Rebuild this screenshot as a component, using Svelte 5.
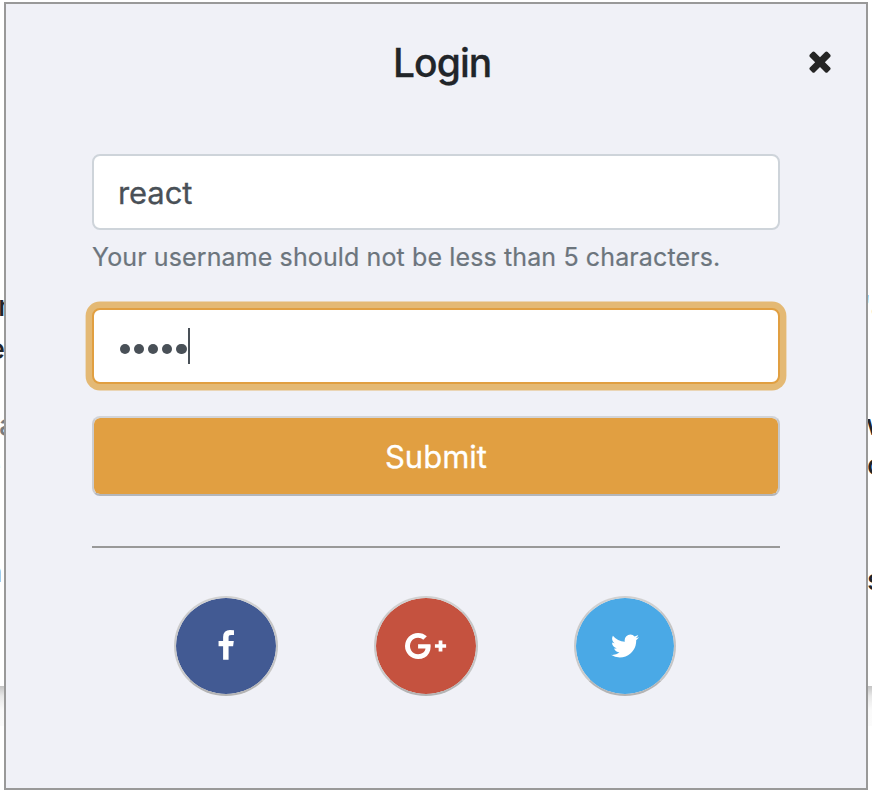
<script>
  const socials = [
    {
      name: 'Facebook', color: '#425a93', width: 104, box: '0 0 1792 1792', iw: 32,
      d: 'M1343 12v264h-157q-86 0-116 36t-30 108v189h293l-39 296h-254v759h-306v-759h-255v-296h255v-218q0-186 104-288.5t277-102.5q147 0 228 12z'
    },
    {
      name: 'Google Plus', color: '#c5523f', width: 104, box: '0 0 2304 1792', iw: 41.14,
      d: 'M1437 913q0 208-87 370.5t-248 254-369 91.5q-149 0-285-58t-234-156-156-234-58-285 58-285 156-234 234-156 285-58q286 0 491 192l-199 191q-117-113-292-113-123 0-227.5 62t-165.5 168.5-61 232.5 61 232.5 165.5 168.5 227.5 62q83 0 152.5-23t114.5-57.5 78.5-78.5 49-83 21.5-74h-416v-252h692q12 63 12 122zm867-122v210h-209v209h-210v-209h-209v-210h209v-209h210v209h209z'
    },
    {
      name: 'Twitter', color: '#4aa9e6', width: 102, box: '0 0 1792 1792', iw: 32,
      d: 'M1684 408q-67 98-162 167 1 14 1 42 0 130-38 259.5t-115.5 248.5-184.5 210.5-258 146-323 54.5q-271 0-496-145 35 4 78 4 225 0 401-138-105-2-188-64.5t-114-159.5q33 5 61 5 43 0 85-11-112-23-185.5-111.5t-73.5-205.5v-4q68 38 146 41-66-44-105-115t-39-154q0-88 44-163 121 149 294.5 238.5t371.5 99.5q-8-38-8-74 0-134 94.5-228.5t228.5-94.5q140 0 236 102 109-21 205-78-37 115-142 178 93-10 186-50z'
    }
  ];
</script>

<div class="page">
  <div class="gutter left">
    <span style="top:288px;left:-2px">n</span>
    <span style="top:331px;left:-12px">e</span>
    <span class="dim" style="top:407px;left:-1px">a</span>
    <span class="dim" style="top:447px;left:-16px">e</span>
    <span class="dim" style="top:554px;left:-15px">n</span>
    <i></i>
  </div>
  <div class="modal">
    <header>
      <h1>Login</h1>
      <button class="close" aria-label="Close">
        <svg viewBox="0 0 1792 1792" width="32" height="32"><path d="M1490 1322q0 40-28 68l-136 136q-28 28-68 28t-68-28l-294-294-294 294q-28 28-68 28t-68-28l-136-136q-28-28-28-68t28-68l294-294-294-294q-28-28-28-68t28-68l136-136q28-28 68-28t68 28l294 294 294-294q28-28 68-28t68 28l136 136q28 28 28 68t-28 68l-294 294 294 294q28 28 28 68z" /></svg>
      </button>
    </header>
    <form>
      <div class="field"><span>react</span></div>
      <p class="help"><span>Your username should not be less than 5 characters.</span></p>
      <div class="field focus">
        {#each Array(5) as _}<b class="dot"></b>{/each}
        <b class="caret"></b>
      </div>
      <button type="button" class="submit"><span>Submit</span></button>
    </form>
    <hr />
    <div class="socials">
      {#each socials as s}
        <button aria-label={s.name} style="background-color:{s.color};width:{s.width}px">
          <svg viewBox={s.box} width={s.iw} height="32"><path d={s.d} /></svg>
        </button>
      {/each}
    </div>
  </div>
  <div class="gutter right">
    <span style="top:288px;left:-6px">'a</span>
    <span style="top:407px;left:-2px">w</span>
    <span style="top:447px;left:-1px">o</span>
    <span style="top:562px;left:-1px">s</span>
    <i></i>
  </div>
</div>

<style>
  :global(body) { margin: 0; background: #fff; }
  .page {
    width: 872px;
    height: 792px;
    display: flex;
    overflow: hidden;
    background: #fff;
    font-family: Inter, "Liberation Sans", sans-serif;
    color: #212529;
  }
  .gutter { position: relative; width: 4px; height: 792px; overflow: hidden; font-size: 29px; line-height: 36px; font-weight: 500; }
  .gutter span { position: absolute; white-space: nowrap; }
  .gutter .dim { opacity: .6; }
  .gutter i {
    position: absolute; left: 0; top: 686px; width: 4px; height: 40px;
    background: linear-gradient(#c4c4c4, #e8e8e8 25%, #fafafa 60%, #fbfbfb);
  }
  .modal {
    box-sizing: border-box;
    width: 864px;
    height: 788px;
    margin-top: 2px;
    border: 2px solid #999;
    background: #f0f1f7;
    padding: 40px 86px 0;
    flex: none;
  }
  header { display: flex; align-items: flex-start; height: 110px; margin-right: -56px; }
  h1 {
    margin: -5px 0 0 301px;
    font-size: 39px;
    line-height: 48px;
    font-weight: 500;
    letter-spacing: -.95px;
    -webkit-text-stroke: .3px;
    flex: 1;
  }
  button { padding: 0; font-family: inherit; display: flex; align-items: center; justify-content: center; }
  .close { border: 0; background: none; margin-top: .8px; fill: #252525; }
  svg { display: block; flex: none; }
  .field {
    box-sizing: border-box;
    height: 76px;
    border: 2px solid #ced4da;
    border-radius: 8px;
    background: #fff;
    color: #495057;
    display: flex;
    align-items: center;
    padding: 0 24px;
    font-size: 31px;
    letter-spacing: -.1px;
    -webkit-text-stroke: .3px;
  }
  .help { margin: 8px 0 0; height: 70px; line-height: 38px; font-size: 25px; color: #6c757d; white-space: nowrap; letter-spacing: .12px; -webkit-text-stroke: .2px; }
  .focus { border-color: #e19f41; box-shadow: 0 0 0 6.4px #e4b974; padding-left: 26px; }
  .dot { width: 10.2px; height: 10.2px; border-radius: 50%; background: #495057; margin: 6px 3.9px 0 0; }
  .caret { width: 2px; height: 36px; background: #495057; margin-left: -2.5px; }
  .submit {
    box-sizing: border-box;
    width: 100%;
    height: 80px;
    margin-top: 32px;
    border: 2px solid;
    border-color: #d2d4d8 #c5c7ca #b4b6ba #cccdd0;
    border-radius: 8px;
    background: #e19f41;
    background-clip: padding-box;
    color: #fff;
    font-size: 31px;
    letter-spacing: 0;
    -webkit-text-stroke: .3px;
  }
  hr { margin: 50px 0 48px; border: 0; height: 2px; background: #999; }
  .socials { display: flex; padding-left: 82px; gap: 96px; }
  .socials button {
    box-sizing: border-box;
    height: 100px;
    border: 2px solid;
    border-color: #d0d0d0 #c5c5c5 #b4b4b4 #cacaca;
    border-radius: 50%;
    background-clip: padding-box;
    fill: #fff;
  }
</style>
